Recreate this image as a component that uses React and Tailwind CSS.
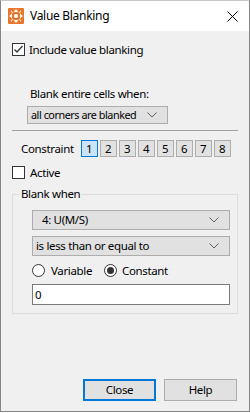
import React from 'react';

function Chevron() {
  return (
    <svg width="10" height="6" viewBox="0 0 10 6" className="shrink-0">
      <path d="M0.5 0.5 L5 5 L9.5 0.5" fill="none" stroke="#606060" strokeWidth="1" />
    </svg>
  );
}

function Select({ text, className, textClass }) {
  return (
    <div className={`flex items-center justify-between shrink-0 whitespace-nowrap bg-[#e1e1e1] border border-[#adadad] pr-[10px] ${className}`}>
      <span className={textClass}>{text}</span>
      <Chevron />
    </div>
  );
}

function Checkbox({ checked }) {
  return (
    <div className="w-[13px] h-[13px] border border-[#333] bg-white flex items-center justify-center shrink-0">
      {checked && (
        <svg width="11" height="11" viewBox="0 0 11 11">
          <path d="M1.5 5.5 L4 8 L9.5 2" fill="none" stroke="#333" strokeWidth="1.3" />
        </svg>
      )}
    </div>
  );
}

function Radio({ checked }) {
  return (
    <div className="w-[13px] h-[13px] rounded-full border border-[#333] bg-white flex items-center justify-center shrink-0">
      {checked && <div className="w-[7px] h-[7px] rounded-full bg-[#333]" />}
    </div>
  );
}

export default function App() {
  const nums = [1, 2, 3, 4, 5, 6, 7, 8];

  return (
    <div className="w-[250px] h-[413px] bg-white text-[11.5px] text-black whitespace-nowrap" style={{ fontFamily: '"Noto Sans", "Open Sans", sans-serif' }}>
      <div className="h-[412px] flex flex-col border-x border-b border-[#858585] border-t border-t-[#c8c8c8]">
        {/* title bar */}
        <div className="h-[30px] bg-white flex items-center shrink-0">
          <svg width="16" height="16" viewBox="0 0 16 16" className="ml-[7px]">
            <rect x="0" y="0" width="16" height="16" rx="1" fill="#e8772e" />
            <circle cx="8" cy="8" r="2" fill="#fff" />
            <path d="M8 1 L10.5 4 L5.5 4 Z M8 15 L10.5 12 L5.5 12 Z M1 8 L4 5.5 L4 10.5 Z M15 8 L12 5.5 L12 10.5 Z" fill="#fff" />
            <path d="M3 3 L5 5 M13 3 L11 5 M3 13 L5 11 M13 13 L11 11" stroke="#fbd3b3" strokeWidth="1.2" />
          </svg>
          <span className="ml-[6px] text-[12px] tracking-[-0.3px]">Value Blanking</span>
          <svg width="11" height="11" viewBox="0 0 11 11" className="ml-auto mr-[11px]">
            <path d="M0.5 0.5 L10.5 10.5 M10.5 0.5 L0.5 10.5" stroke="#000" strokeWidth="1" />
          </svg>
        </div>

        {/* body */}
        <div className="flex-1 bg-[#f0f0f0] flex flex-col tracking-[-0.35px]">
          <div className="flex items-center h-[13px] mt-[12px] ml-[11px]">
            <Checkbox checked />
            <span className="ml-[4px]">Include value blanking</span>
          </div>

          <div className="ml-[29px] mt-[30px] h-[16px] leading-[16px]">Blank entire cells when:</div>

          <Select
            text="all corners are blanked"
            className="ml-[26px] w-[141px] h-[18px] mt-[4px] pr-[9px]"
            textClass="ml-[3px] text-[10.8px] tracking-[-0.45px]"
          />

          <div className="mx-[11px] mt-[6px] h-px bg-[#a0a0a0]" />

          <div className="flex items-center mt-[9px] ml-[20px] h-[17px]">
            <span className="mr-[7px]">Constraint</span>
            <div className="flex gap-[2px]">
              {nums.map((n) =>
                n === 1 ? (
                  <div key={n} className="w-[17px] h-[17px] border border-[#0078d7] bg-[#cce4f7] flex items-end justify-center leading-[15px]">
                    {n}
                  </div>
                ) : (
                  <div key={n} className="w-[17px] h-[17px] border border-[#adadad] bg-[#e1e1e1] flex items-center justify-center">
                    {n}
                  </div>
                )
              )}
            </div>
          </div>

          <div className="flex items-center h-[13px] mt-[9px] ml-[11px]">
            <Checkbox />
            <span className="ml-[5px]">Active</span>
          </div>

          <div className="relative mx-[11px] mt-[15px] h-[120px] border border-[#dcdcdc] flex flex-col">
            <span className="absolute -top-[9px] left-[6px] bg-[#f0f0f0] px-[2px] leading-[16px]">Blank when</span>
            <Select
              text="4: U(M/S)"
              className="ml-[19px] w-[198px] h-[20px] mt-[15px]"
              textClass="ml-[9px]"
            />
            <Select
              text="is less than or equal to"
              className="ml-[19px] w-[198px] h-[20px] mt-[6px]"
              textClass="ml-[3px]"
            />
            <div className="flex items-center h-[13px] mt-[8px] ml-[19px]">
              <Radio />
              <span className="ml-[6px]">Variable</span>
              <div className="ml-[12px] flex items-center">
                <Radio checked />
                <span className="ml-[5px]">Constant</span>
              </div>
            </div>
            <div className="ml-[19px] w-[198px] h-[21px] mt-[7px] bg-white border border-[#7a7a7a] flex items-center pl-[2px]">
              0
            </div>
          </div>

          <div className="flex mt-auto mb-[10px] ml-[82px] gap-[8px]">
            <div className="w-[73px] h-[22px] border-2 border-[#0078d7] bg-[#e1e1e1] flex items-center justify-center">Close</div>
            <div className="w-[73px] h-[22px] border border-[#adadad] bg-[#e1e1e1] flex items-center justify-center">Help</div>
          </div>
        </div>
      </div>
    </div>
  );
}
